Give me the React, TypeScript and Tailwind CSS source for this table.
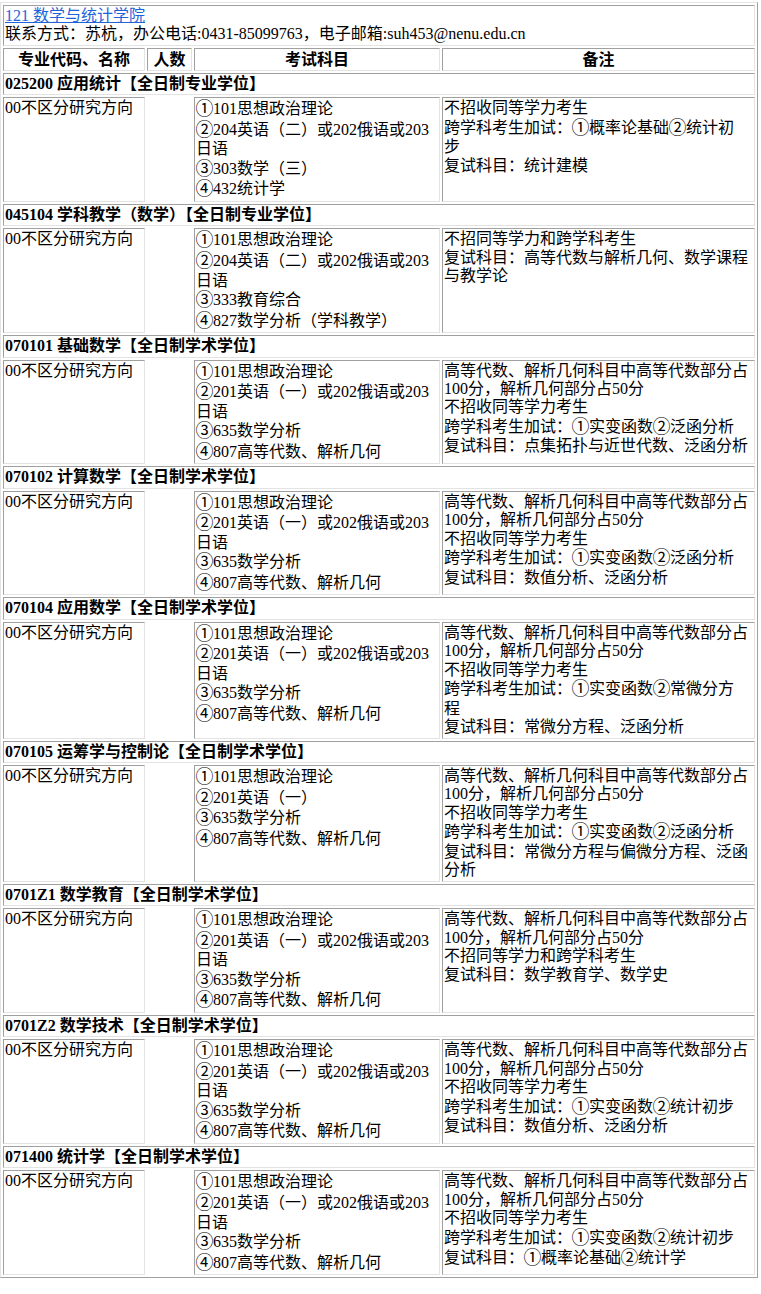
import React from "react";

type Program = { code: string; subjects: string[]; notes: string[] };

const std = [
  "①101思想政治理论",
  "②201英语（一）或202俄语或203",
  "日语",
  "③635数学分析",
  "④807高等代数、解析几何",
];
const hi = "高等代数、解析几何科目中高等代数部分占";
const hi2 = "100分，解析几何部分占50分";

const programs: Program[] = [
  {
    code: "025200 应用统计【全日制专业学位】",
    subjects: ["①101思想政治理论", "②204英语（二）或202俄语或203", "日语", "③303数学（三）", "④432统计学"],
    notes: ["不招收同等学力考生", "跨学科考生加试：①概率论基础②统计初", "步", "复试科目：统计建模"],
  },
  {
    code: "045104 学科教学（数学）【全日制专业学位】",
    subjects: ["①101思想政治理论", "②204英语（二）或202俄语或203", "日语", "③333教育综合", "④827数学分析（学科教学）"],
    notes: ["不招同等学力和跨学科考生", "复试科目：高等代数与解析几何、数学课程", "与教学论"],
  },
  {
    code: "070101 基础数学【全日制学术学位】",
    subjects: std,
    notes: [hi, hi2, "不招收同等学力考生", "跨学科考生加试：①实变函数②泛函分析", "复试科目：点集拓扑与近世代数、泛函分析"],
  },
  {
    code: "070102 计算数学【全日制学术学位】",
    subjects: std,
    notes: [hi, hi2, "不招收同等学力考生", "跨学科考生加试：①实变函数②泛函分析", "复试科目：数值分析、泛函分析"],
  },
  {
    code: "070104 应用数学【全日制学术学位】",
    subjects: std,
    notes: [hi, hi2, "不招收同等学力考生", "跨学科考生加试：①实变函数②常微分方", "程", "复试科目：常微分方程、泛函分析"],
  },
  {
    code: "070105 运筹学与控制论【全日制学术学位】",
    subjects: ["①101思想政治理论", "②201英语（一）", "③635数学分析", "④807高等代数、解析几何"],
    notes: [hi, hi2, "不招收同等学力考生", "跨学科考生加试：①实变函数②泛函分析", "复试科目：常微分方程与偏微分方程、泛函", "分析"],
  },
  {
    code: "0701Z1 数学教育【全日制学术学位】",
    subjects: std,
    notes: [hi, hi2, "不招同等学力和跨学科考生", "复试科目：数学教育学、数学史"],
  },
  {
    code: "0701Z2 数学技术【全日制学术学位】",
    subjects: std,
    notes: [hi, hi2, "不招收同等学力考生", "跨学科考生加试：①实变函数②统计初步", "复试科目：数值分析、泛函分析"],
  },
  {
    code: "071400 统计学【全日制学术学位】",
    subjects: std,
    notes: [hi, hi2, "不招收同等学力考生", "跨学科考生加试：①实变函数②统计初步", "复试科目：①概率论基础②统计学"],
  },
];

const circled = /[①②③④]/;

function Line({ text }: { text: string }) {
  const has = circled.test(text);
  const parts = text.split(/([①②③④])/).filter((p) => p.length > 0);
  return (
    <div className={(has ? "leading-[20.55px]" : "leading-[18.45px]") + " whitespace-nowrap"}>
      {parts.map((p, i) =>
        circled.test(p) ? (
          <span key={i} className="inline-block w-[17px] text-center scale-[1.12]">
            {p}
          </span>
        ) : (
          <span key={i}>{p}</span>
        )
      )}
    </div>
  );
}

const cell =
  "border border-t-[#a0a0a0] border-l-[#a0a0a0] border-r-[#e3e3e3] border-b-[#e3e3e3] p-[1px] align-top";

export default function App() {
  return (
    <div className="bg-white pt-[2px] text-black text-[16px] font-['Liberation_Serif','Noto_Sans_CJK_SC',serif]">
      <table className="w-[758px] border-separate border-spacing-[2px] border border-t-[#e3e3e3] border-l-[#e3e3e3] border-r-[#a0a0a0] border-b-[#a0a0a0]">
        <tbody>
          <tr>
            <td colSpan={4} className={cell}>
              <div className="leading-[18.45px]">
                <a href="#" className="text-[#1f63d8] underline">
                  121 数学与统计学院
                </a>
              </div>
              <div className="leading-[18.45px] whitespace-nowrap">
                联系方式：苏杭，办公电话:0431-85099763，电子邮箱:suh453@nenu.edu.cn
              </div>
            </td>
          </tr>
          <tr>
            <th className={cell + " w-[142px] text-center font-bold leading-[19px]"}>专业代码、名称</th>
            <th className={cell + " w-[45px] text-center font-bold leading-[19px]"}>人数</th>
            <th className={cell + " w-[246px] text-center font-bold leading-[19px]"}>考试科目</th>
            <th className={cell + " w-[313px] text-center font-bold leading-[19px]"}>备注</th>
          </tr>
          {programs.map((p) => (
            <React.Fragment key={p.code}>
              <tr>
                <td colSpan={4} className={cell + " font-bold leading-[18.45px] whitespace-nowrap"}>
                  {p.code}
                </td>
              </tr>
              <tr>
                <td className={cell + " w-[142px]"}>
                  <Line text="00不区分研究方向" />
                </td>
                <td className="w-[45px] border-0 p-0"></td>
                <td className={cell + " w-[246px]"}>
                  {p.subjects.map((s, i) => (
                    <Line key={i} text={s} />
                  ))}
                </td>
                <td className={cell + " w-[313px]"}>
                  {p.notes.map((s, i) => (
                    <Line key={i} text={s} />
                  ))}
                </td>
              </tr>
            </React.Fragment>
          ))}
        </tbody>
      </table>
    </div>
  );
}
